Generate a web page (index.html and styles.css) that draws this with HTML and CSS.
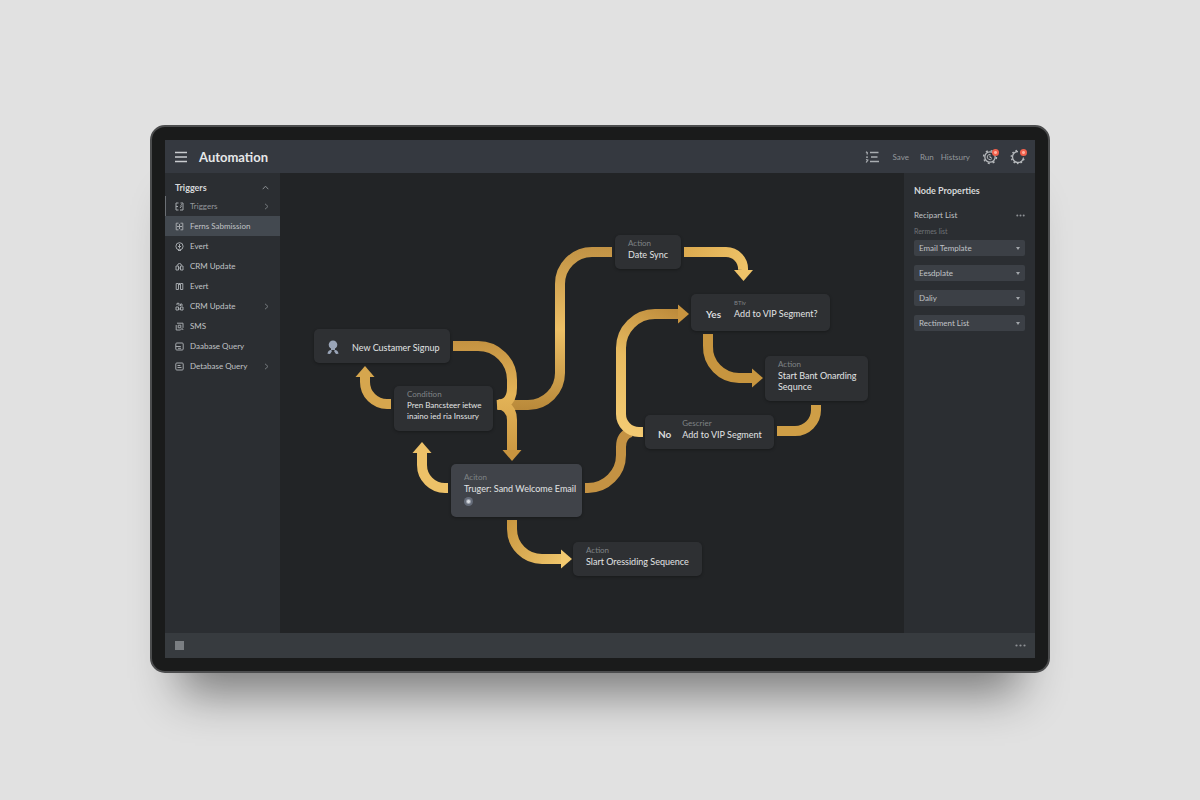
FILE: index.html
```
<!DOCTYPE html>
<html lang="en">

<head>
    <meta charset="UTF-8">
    <meta name="viewport" content="width=device-width, initial-scale=1.0">
    <title>Automation</title>
    <link rel="stylesheet" href="styles.css">
</head>

<body>

    <div class="device">
        <div class="screen">

            <header class="topbar">
                <button class="icon-btn" aria-label="Menu">
                    <svg width="12" height="12" viewBox="0 0 12 12" stroke="#c9cccf" stroke-width="1.3"><path d="M0 1.5h12M0 6h12M0 10.5h12"/></svg>
                </button>
                <h1>Automation</h1>
                <nav class="tools">
                    <button class="icon-btn" aria-label="Steps">
                        <svg width="14" height="12" viewBox="0 0 14 12" fill="none" stroke="#a9adb1" stroke-width="1.3"><path d="M5 1.5h8.5M6 6h6.5M5 10.5h9M1 .8l1.2.8v2M1 6.2h2M1 8.5l1.8.6L1.2 11.5"/></svg>
                    </button>
                    <button class="text-btn save">Save</button>
                    <button class="text-btn run">Run</button>
                    <button class="text-btn history">Histsury</button>
                    <button class="icon-btn badge-btn" aria-label="Settings">
                        <svg width="16" height="16" viewBox="0 0 16 16" fill="none" stroke="#b5b8bb"><circle cx="8" cy="8" r="5.2" stroke-width="1.3"/><circle cx="8" cy="8" r="6.4" stroke-width="1.5" stroke-dasharray="2 3.02"/><path d="M8.500 5.500a2.600 2.600 0 1 0 1.500 4M8 6.500v2h1.500" stroke-width="1"/></svg>
                        <span class="badge"></span>
                    </button>
                    <button class="icon-btn badge-btn" aria-label="Account">
                        <svg width="16" height="16" viewBox="0 0 16 16" fill="none" stroke="#b5b8bb"><path d="M8 2.5a5.5 5.5 0 1 0 5.5 6" stroke-width="1.3"/><path d="M7 1.6a6.4 6.4 0 1 0 7 8" stroke-width="1.6" stroke-dasharray="1.6 2"/></svg>
                        <span class="badge"></span>
                    </button>
                </nav>
            </header>

            <aside class="sidebar">
                <h2>Triggers
                    <svg width="7" height="5" viewBox="0 0 7 5" fill="none" stroke="#8b8f93"><path d="M.7 4.2 3.5 1.2l2.8 3"/></svg>
                </h2>
                <ul>
                    <li><a href="#" class="current"><svg class="ico" viewBox="0 0 9 9"><path d="M3.5 1H1v7h2.5M1 4.5h2M5.500 1H8v7H5M5.500 3.500 7 2.500M5 6l1.500-2"/></svg>Triggers<svg class="chev" viewBox="0 0 5 7"><path d="m1 .8 3 2.7-3 2.7"/></svg></a></li>
                    <li><a href="#" class="active"><svg class="ico" viewBox="0 0 9 9"><path d="M3.5 1.2H1.2v6.6h2.3M5.5 1.2h2.3v6.6H5.5M4.5 2v5M2 4.5h5"/></svg>Ferns Sabmission</a></li>
                    <li><a href="#"><svg class="ico" viewBox="0 0 9 9"><circle cx="4.5" cy="4.3" r="3.6"/><path d="M4.5 2v4.5M3 4.5h3M3 8.5h3"/></svg>Evert</a></li>
                    <li><a href="#"><svg class="ico" viewBox="0 0 9 9"><path d="M2.5 3.5a2 2 0 0 1 4 0M1 4h2.5v4H1zM5.5 4H8v4H5.5zM3.5 6h2"/></svg>CRM Update</a></li>
                    <li><a href="#"><svg class="ico" viewBox="0 0 9 9"><path d="M3.5 1.5H1.2v6h2.3zM5.5 1.5h2.3v6H5.5zM4.5 1v2"/></svg>Evert</a></li>
                    <li><a href="#"><svg class="ico" viewBox="0 0 9 9"><path d="M2 3V1.3h2V4M5.5 4V2H7v2M1 5h2.5v3H1zM5.5 5H8v3H5.5zM3.5 7h2"/></svg>CRM Update<svg class="chev" viewBox="0 0 5 7"><path d="m1 .8 3 2.7-3 2.7"/></svg></a></li>
                    <li><a href="#"><svg class="ico" viewBox="0 0 9 9"><path d="M2 1.2h6v4.3L5.5 8H1.2V3M3.2 3.2h2.6v2.6H3.2zM7.8 7v1"/></svg>SMS</a></li>
                    <li><a href="#"><svg class="ico" viewBox="0 0 9 9"><rect x=".8" y="1" width="7.4" height="7" rx="1"/><path d="M.8 4.5h5M3 6.3h3"/></svg>Daabase Query</a></li>
                    <li><a href="#"><svg class="ico" viewBox="0 0 9 9"><rect x=".8" y="1" width="7.4" height="7" rx="1"/><path d="M2.5 3.5h3M2.5 5.5h4"/></svg>Detabase Query<svg class="chev" viewBox="0 0 5 7"><path d="m1 .8 3 2.7-3 2.7"/></svg></a></li>
                </ul>
            </aside>

            <main class="canvas">
                <div class="board">
                    <!-- Connectors -->
                    <svg class="wires" width="624" height="460" viewBox="0 0 624 460">
                        <defs>
                            <linearGradient id="goldDown" gradientUnits="userSpaceOnUse" x1="0" y1="165" x2="0" y2="290">
                                <stop offset="0" stop-color="#c29040"/>
                                <stop offset=".45" stop-color="#e4b458"/>
                                <stop offset="1" stop-color="#c8943f"/>
                            </linearGradient>
                            <linearGradient id="goldSync" gradientUnits="userSpaceOnUse" x1="0" y1="75" x2="0" y2="238">
                                <stop offset="0" stop-color="#c29345"/>
                                <stop offset=".5" stop-color="#edc066"/>
                                <stop offset="1" stop-color="#b88839"/>
                            </linearGradient>
                            <linearGradient id="goldLoop" gradientUnits="userSpaceOnUse" x1="340" y1="265" x2="400" y2="140">
                                <stop offset="0" stop-color="#f4cc75"/>
                                <stop offset=".55" stop-color="#e8bb60"/>
                                <stop offset="1" stop-color="#be8c3c"/>
                            </linearGradient>
                            <linearGradient id="goldLight" gradientUnits="userSpaceOnUse" x1="400" y1="80" x2="465" y2="105">
                                <stop offset="0" stop-color="#dba94e"/>
                                <stop offset="1" stop-color="#f0c469"/>
                            </linearGradient>
                            <linearGradient id="goldOut" gradientUnits="userSpaceOnUse" x1="230" y1="345" x2="290" y2="390">
                                <stop offset="0" stop-color="#c8963f"/>
                                <stop offset="1" stop-color="#f3ca70"/>
                            </linearGradient>
                        </defs>
                        <g fill="none" stroke-width="10">
                            <path stroke="url(#goldSync)" d="M332 79H312a32 32 0 0 0-32 32V200a32 32 0 0 1-32 32H218"/>
                            <path stroke="url(#goldDown)" d="M218 231q14 2 14 16v31"/>
                            <path stroke="url(#goldDown)" d="M173 173h25a34 34 0 0 1 34 34v8q0 16-15 17"/>
                            <path stroke="url(#goldLight)" d="M404 79h42a17 17 0 0 1 17 18"/>
                            <path stroke="#c49243" d="M305 315h3a33 33 0 0 0 33-33v-8q0-12 10-15"/>
                            <path stroke="url(#goldLoop)" d="M363 259h-4a18 18 0 0 1-18-18v-66a34 34 0 0 1 34-34h24"/>
                            <path stroke="#c7953f" d="M428 161v12a31 31 0 0 0 31 32h14"/>
                            <path stroke="#cf9e46" d="M536 232v5a21 21 0 0 1-21 21h-18"/>
                            <path stroke="#d6a64e" d="M111 231h-4a22 22 0 0 1-22-22v-6"/>
                            <path stroke="#edc168" d="M168 315h-3a23 23 0 0 1-23-23v-13"/>
                            <path stroke="url(#goldOut)" d="M232 347v9a30 30 0 0 0 30 30h20"/>
                        </g>
                        <!-- Arrow heads -->
                        <path fill="#c8943f" d="M222.5 277h19l-9.5 11z"/>
                        <path fill="#f0c469" d="M454 97h19l-9.500 11z"/>
                        <path fill="#c8943f" d="M398 131.500v19l11-9.500z"/>
                        <path fill="#c7953f" d="M472 195.500v19l11-9.500z"/>
                        <path fill="#d6a64e" d="M75.500 204h19L85 193z"/>
                        <path fill="#edc168" d="M132.500 280h19l-9.500-11z"/>
                        <path fill="#f3ca70" d="M281 376.500v19l11-9.500z"/>
                    </svg>

                    <!-- Nodes -->
                    <section class="node row signup">
                        <svg width="12" height="15" viewBox="0 0 12 15" fill="#9aa5b8"><circle cx="6" cy="4.800" r="4.300"/><path d="M4 8h4v2H4zM.5 13.800C.7 11.500 2 10 4.300 9.800L4.800 11.500 3 14zM11.500 13.800C11.300 11.500 10 10 7.700 9.800L7.200 11.500 9 14z"/></svg>
                        <h3>New Custamer Signup</h3>
                    </section>
                    <section class="node condition">
                        <small>Condition</small>
                        <h3>Pren Bancsteer ietwe<br>inaino ied ria Inssury</h3>
                    </section>
                    <section class="node welcome">
                        <small>Aciton</small>
                        <h3>Truger: Sand Welcome Email</h3>
                        <i class="dot"></i>
                    </section>
                    <section class="node sequence">
                        <small>Action</small>
                        <h3>Slart Oressiding Sequence</h3>
                    </section>
                    <section class="node sync">
                        <small>Action</small>
                        <h3>Date Sync</h3>
                    </section>
                    <section class="node row yes">
                        <strong>Yes</strong>
                        <div>
                            <small class="tiny">BTiv</small>
                            <h3>Add to VIP Segment?</h3>
                        </div>
                    </section>
                    <section class="node band">
                        <small>Action</small>
                        <h3>Start Bant Onarding<br>Sequnce</h3>
                    </section>
                    <section class="node row no">
                        <strong>No</strong>
                        <div>
                            <small>Gescrier</small>
                            <h3>Add to VIP Segment</h3>
                        </div>
                    </section>
                </div>
            </main>

            <aside class="properties">
                <h2>Node Properties</h2>
                <div class="prop-row">
                    <span>Recipart List</span>
                    <button class="icon-btn" aria-label="More options">
                        <svg width="9" height="3" viewBox="0 0 9 3" fill="#8d9195"><circle cx="1.3" cy="1.5" r="1"/><circle cx="4.5" cy="1.5" r="1"/><circle cx="7.7" cy="1.5" r="1"/></svg>
                    </button>
                </div>
                <label for="template">Rermes list</label>
                <div class="field"><select id="template"><option>Email Template</option></select></div>
                <div class="field"><select aria-label="Template"><option>Eesdplate</option></select></div>
                <div class="field"><select aria-label="Frequency"><option>Daliy</option></select></div>
                <div class="field"><select aria-label="List"><option>Rectiment List</option></select></div>
            </aside>

            <footer class="statusbar">
                <button class="stop" aria-label="Stop"></button>
                <button class="icon-btn" aria-label="More">
                    <svg width="11" height="3" viewBox="0 0 11 3" fill="#8d9195"><circle cx="1.5" cy="1.5" r="1.1"/><circle cx="5.5" cy="1.5" r="1.1"/><circle cx="9.5" cy="1.5" r="1.1"/></svg>
                </button>
            </footer>

        </div>
    </div>

</body>

</html>
```
FILE: styles.css
```
* {
    margin: 0;
    padding: 0;
    box-sizing: border-box;
}

body {
    display: flex;
    min-height: 100vh;
    padding: 125px 150px 127px;
    font-family: Lato, "Noto Sans", sans-serif;
    font-size: 8px;
    background-color: #e1e1e1;
    color: #c0c3c6;
}

button,
select {
    font: inherit;
    color: inherit;
    border: none;
    background: none;
    cursor: pointer;
}

svg {
    display: block;
    flex: none;
}

h3 {
    font-weight: 400;
}

/* Monitor */
.device {
    flex: 1;
    display: flex;
    padding: 13px;
    border: 2px solid #4c4d4e;
    border-radius: 15px;
    background-color: #1a1b1b;
    box-shadow: 0 50px 44px -30px rgba(0, 0, 0, 0.46);
}

.screen {
    flex: 1;
    display: grid;
    grid-template-columns: 115px 1fr 131px;
    grid-template-rows: 33px 1fr 25px;
    background-color: #222426;
}

/* Top bar */
.topbar {
    grid-column: 1 / -1;
    display: flex;
    align-items: center;
    padding: 0 9px 0 10px;
    background-color: #353940;
}

.topbar h1 {
    margin-left: 12px;
    font-size: 13px;
    font-weight: 700;
    color: #e6e7e8;
}

.tools {
    display: flex;
    align-items: center;
    margin-left: auto;
    color: #94989c;
}

.save {
    margin-left: 14px;
}

.run {
    margin-left: 11px;
}

.history {
    margin: 0 12px 0 7px;
}

.badge-btn {
    position: relative;
}

.badge-btn + .badge-btn {
    margin-left: 12px;
}

.badge {
    position: absolute;
    top: 0;
    right: -1px;
    width: 7px;
    height: 7px;
    border-radius: 50%;
    background: radial-gradient(#ffb09f 1px, #f0604c 2px);
}

/* Sidebar */
.sidebar {
    padding-top: 5px;
    background-color: #2b2e32;
}

.sidebar h2 {
    display: flex;
    align-items: center;
    justify-content: space-between;
    height: 18px;
    padding: 0 11px 0 10px;
    font-size: 9px;
    font-weight: 700;
    color: #d6d8da;
}

.sidebar ul {
    list-style: none;
}

.sidebar a {
    display: flex;
    align-items: center;
    gap: 6px;
    height: 20px;
    padding: 0 11px 0 10px;
    color: inherit;
    text-decoration: none;
}

.sidebar .current {
    border-left: 1px solid #6b6f74;
    padding-left: 9px;
    color: #93979b;
}

.sidebar .active {
    background-color: #434950;
}

.ico {
    width: 9px;
    height: 9px;
    fill: none;
    stroke: #a4a8ac;
}

.chev {
    width: 5px;
    height: 7px;
    margin-left: auto;
    fill: none;
    stroke: #75797d;
}

/* Flow canvas */
.canvas {
    display: flex;
    justify-content: center;
}

.board {
    position: relative;
    width: 624px;
    height: 460px;
}

.node {
    position: absolute;
    padding: 3px 0 0 13px;
    border-radius: 5px;
    background-color: #2e3033;
    box-shadow: 0 1px 3px rgba(0, 0, 0, 0.3);
}

.node.row {
    display: flex;
    align-items: center;
}

.row div {
    align-self: flex-start;
}

.node h3 {
    font-size: 9px;
    line-height: 11px;
    white-space: nowrap;
    color: #e2e4e5;
}

.node small {
    display: block;
    font-size: 8px;
    line-height: 11px;
    color: #7f8386;
}

.node .tiny {
    font-size: 6px;
}

.node strong {
    font-size: 10px;
    font-weight: 700;
    color: #d9dbdc;
}

.signup {
    left: 34px;
    top: 156px;
    width: 136px;
    height: 34px;
    gap: 13px;
}

.condition {
    left: 114px;
    top: 213px;
    width: 99px;
    height: 45px;
}

.condition h3 {
    font-size: 8px;
}

.welcome {
    left: 171px;
    top: 291px;
    width: 131px;
    height: 53px;
    padding-top: 8px;
    background-color: #404349;
}

.dot {
    display: block;
    width: 9px;
    height: 9px;
    margin-top: 3px;
    border-radius: 50%;
    background: radial-gradient(#d5d9df 1px, #646b78 3px);
}

.sequence {
    left: 293px;
    top: 369px;
    width: 129px;
    height: 34px;
}

.sync {
    left: 335px;
    top: 62px;
    width: 66px;
    height: 34px;
}

.yes {
    left: 411px;
    top: 121px;
    width: 139px;
    height: 37px;
    gap: 13px;
    padding-left: 15px;
}

.band {
    left: 485px;
    top: 183px;
    width: 103px;
    height: 45px;
}

.no {
    left: 365px;
    top: 242px;
    width: 129px;
    height: 34px;
    gap: 11px;
}

/* Properties panel */
.properties {
    padding: 12px 10px;
    background-color: #2b2e32;
}

.properties h2 {
    font-size: 9px;
    line-height: 12px;
    font-weight: 700;
    color: #d6d8da;
}

.prop-row {
    display: flex;
    align-items: center;
    justify-content: space-between;
    margin-top: 12px;
    line-height: 12px;
}

.properties label {
    display: block;
    margin-top: 5px;
    font-size: 7px;
    line-height: 10px;
    color: #6f7377;
}

.field {
    position: relative;
    margin-top: 9px;
}

label + .field {
    margin-top: 4px;
}

.field select {
    display: block;
    width: 100%;
    height: 16px;
    padding: 0 5px;
    border-radius: 2px;
    background-color: #3c4046;
    appearance: none;
}

.field::after {
    content: "";
    position: absolute;
    top: 7px;
    right: 5px;
    border: 2px solid transparent;
    border-top: 3px solid #a2a6aa;
    border-bottom: none;
    pointer-events: none;
}

/* Status bar */
.statusbar {
    grid-column: 1 / -1;
    display: flex;
    align-items: center;
    justify-content: space-between;
    padding: 0 9px 0 10px;
    background-color: #373b3f;
}

.stop {
    width: 9px;
    height: 9px;
    background-color: #7b7f83;
}
```
